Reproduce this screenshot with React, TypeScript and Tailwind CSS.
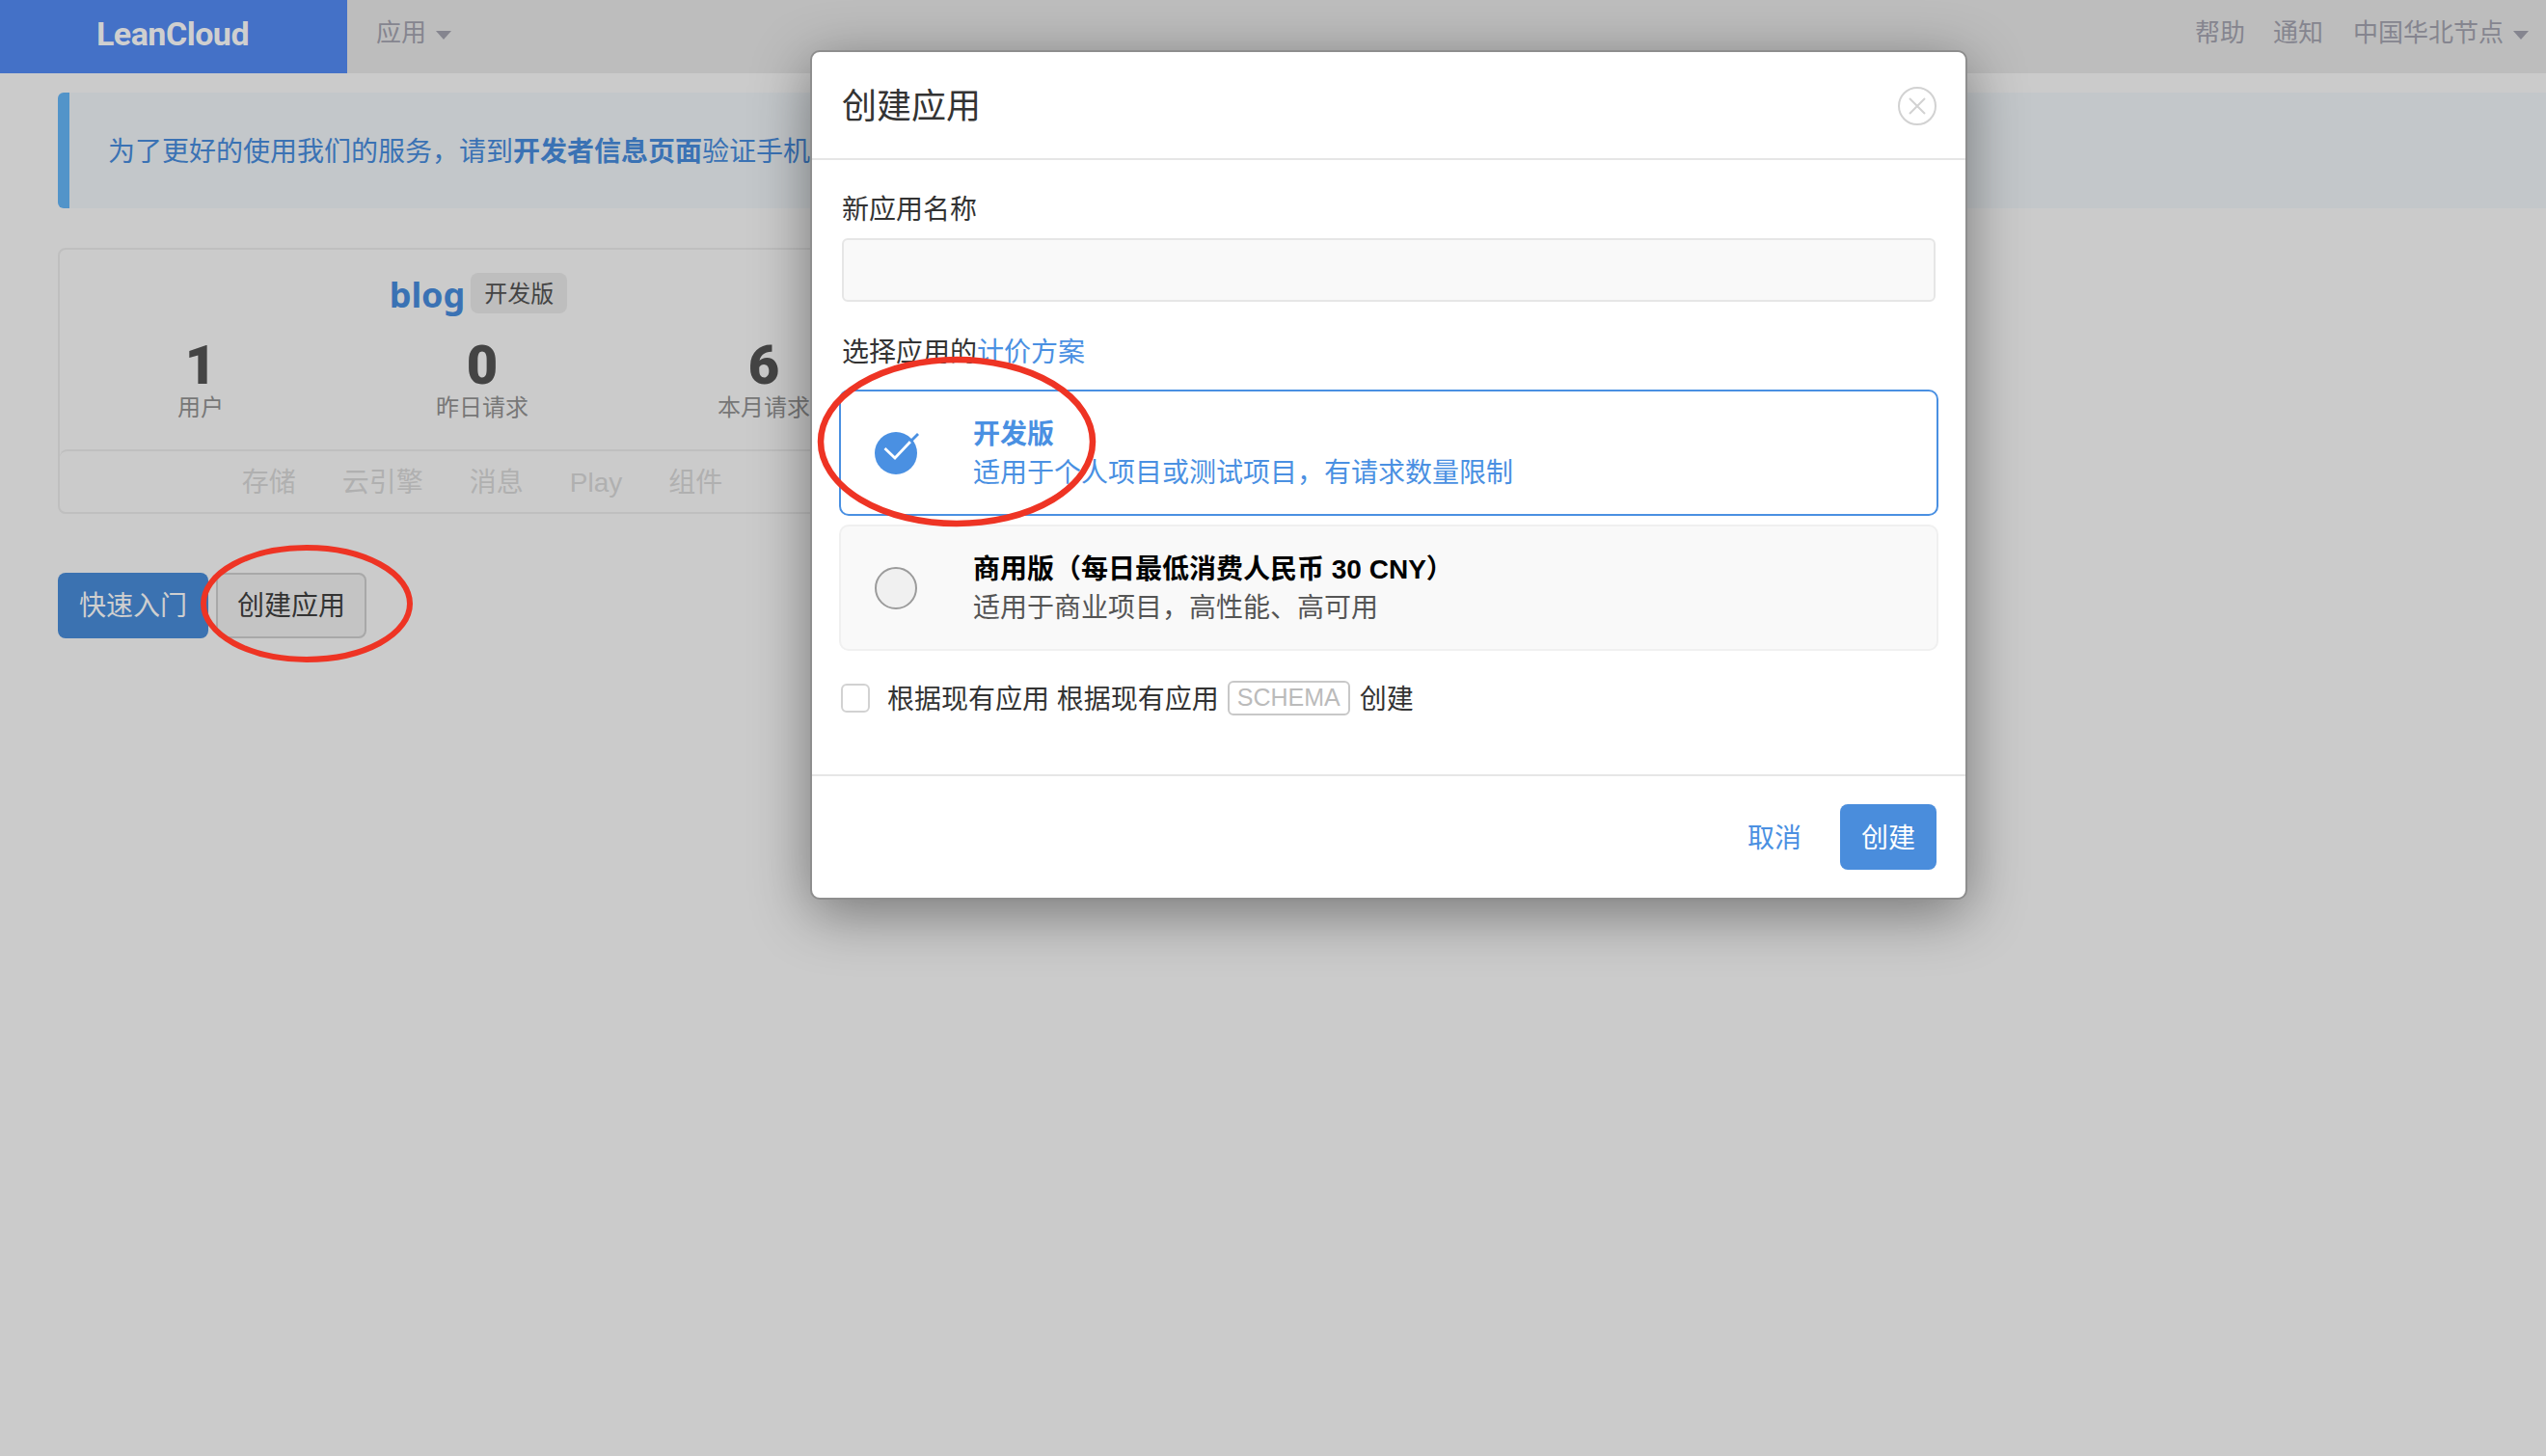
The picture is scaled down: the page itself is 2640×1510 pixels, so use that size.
import React from "react";

const FONT = "font-['Liberation_Sans','Noto_Sans_CJK_SC',sans-serif]";

function Caret({ color }: { color: string }) {
  return (
    <svg width="16" height="9" viewBox="0 0 16 9" className="shrink-0">
      <path d="M0 0h16L8 9z" fill={color} />
    </svg>
  );
}

function Stat({ value, label }: { value: string; label: string }) {
  return (
    <div className="flex flex-col items-center">
      <div className="h-[56px] pt-[1px] text-[56px] font-black leading-[56px] text-[#444] font-['Roboto',sans-serif]">{value}</div>
      <div className="h-[34px] text-[24px] leading-[34px] text-[#777]">{label}</div>
    </div>
  );
}

function CheckedRadio() {
  return (
    <svg width="50" height="50" viewBox="0 0 50 50" className="-mr-[6px] -mt-[6px] shrink-0">
      <circle cx="22" cy="28" r="22" fill="#4a90e2" />
      <path d="M10.500 23 L21 33 L37 16" fill="none" stroke="#fff" strokeWidth="2.800" />
      <path d="M37 16 L45 8" fill="none" stroke="#4a90e2" strokeWidth="2.800" />
    </svg>
  );
}

function Plan({
  selected,
  title,
  desc,
}: {
  selected?: boolean;
  title: string;
  desc: string;
}) {
  return (
    <div
      className={
        selected
          ? "-mx-[3px] flex h-[131px] items-center rounded-[10px] border-2 border-[#4a90e2] bg-white pl-[35px]"
          : "-mx-[3px] flex h-[131px] items-center rounded-[10px] border-2 border-[#f0f0f0] bg-[#f9f9f9] pl-[35px]"
      }
    >
      {selected ? (
        <CheckedRadio />
      ) : (
        <div className="h-[44px] w-[44px] shrink-0 rounded-full border-2 border-[#9b9b9b] bg-[#f0f0f0]" />
      )}
      <div className="ml-[58px] pt-[3px]">
        <div
          className={
            selected
              ? "text-[28px] font-bold leading-[40px] text-[#4a90e2]"
              : "text-[28px] font-bold leading-[40px] text-black"
          }
        >
          {title}
        </div>
        <div
          className={
            selected
              ? "text-[28px] leading-[40px] text-[#4a90e2]"
              : "text-[28px] leading-[40px] text-[#555]"
          }
        >
          {desc}
        </div>
      </div>
    </div>
  );
}

export default function App() {
  return (
    <div className={`relative h-[1510px] w-full overflow-hidden bg-[#cbcbcb] ${FONT}`}>
      {/* navbar */}
      <header className="flex h-[76px] items-center bg-[#bdbdbd] pr-[18px]">
        <div className="flex h-full w-[360px] items-center justify-center bg-[#4471c7] pb-[5px] pr-[2px] text-[34px] font-bold tracking-[-0.5px] text-[#cfcfcf] font-['Roboto',sans-serif]">
          LeanCloud
        </div>
        <div className="ml-[30px] flex items-center gap-[10px] pb-[8px] text-[26px] text-[#85858f]">
          应用
          <span className="pt-[4px]">
            <Caret color="#85858f" />
          </span>
        </div>
        <div className="ml-auto flex items-center pb-[8px] text-[26px] text-[#85858f]">
          <span>帮助</span>
          <span className="ml-[29px]">通知</span>
          <span className="ml-[31px]">中国华北节点</span>
          <span className="ml-[10px] pt-[4px]">
            <Caret color="#85858f" />
          </span>
        </div>
      </header>

      <main className="pl-[60px] pt-[20px]">
        <div className="flex h-[120px] items-center rounded-l-[6px] border-l-[12px] border-[#5294c9] bg-[#c3c7ca] pl-[40px] pt-[3px] text-[28px] text-[#3a72b4]">
          为了更好的使用我们的服务，请到<b>开发者信息页面</b>验证手机号码。
        </div>

        {/* app card */}
        <div className="mt-[41px] flex h-[276px] w-[880px] flex-col rounded-[8px] border-2 border-[#bfbfbf]">
          <div className="mt-[24px] flex h-[42px] items-center justify-center gap-[6px] pr-[8px]">
            <span className="pt-[3px] text-[36px] font-bold leading-[42px] text-[#3a72b4] font-['Noto_Sans',sans-serif]">blog</span>
            <span className="flex h-[42px] w-[100px] items-center justify-center rounded-[8px] bg-[#bebebe] pt-[1px] text-[24px] text-[#444]">
              开发版
            </span>
          </div>
          <div className="mt-[25px] grid grid-cols-3">
            <Stat value="1" label="用户" />
            <Stat value="0" label="昨日请求" />
            <Stat value="6" label="本月请求" />
          </div>
          <div className="mt-auto flex h-[65px] items-center justify-center gap-[48px] rounded-[8px] border-t-2 border-[#bfbfbf] pt-[2px] text-[28px] text-[#b0b0b0]">
            <span>存储</span>
            <span>云引擎</span>
            <span>消息</span>
            <span>Play</span>
            <span>组件</span>
          </div>
        </div>

        <div className="mt-[61px] flex gap-[8px]">
          <button className="h-[68px] w-[156px] rounded-[8px] bg-[#3b72b1] pt-[2px] text-[28px] text-[#cfcfcf]">
            快速入门
          </button>
          <button className="h-[68px] w-[156px] rounded-[8px] border-2 border-[#a8a8a8] bg-[#c4c4c4] pt-[2px] text-[28px] text-[#333]">
            创建应用
          </button>
        </div>
      </main>

      {/* modal */}
      <div className="absolute left-[840px] top-[52px] w-[1200px] rounded-[10px] border-2 border-[#8e8e8e] bg-white shadow-[0_14px_60px_rgba(0,0,0,0.42)]">
        <div className="flex h-[112px] items-center justify-between border-b-2 border-[#e6e6e6] pl-[31px] pr-[30px]">
          <h2 className="pt-[3px] text-[36px] font-normal text-[#333]">创建应用</h2>
          <svg width="40" height="40" viewBox="0 0 40 40" fill="none" stroke="#d2d2d2" strokeWidth="2" className="mt-[1px]">
            <circle cx="20" cy="20" r="19" />
            <path d="M12 12l16 16M28 12L12 28" />
          </svg>
        </div>

        <div className="px-[31px] pb-[59px] pt-[32px]">
          <div className="text-[28px] leading-[40px] text-[#333]">新应用名称</div>
          <div className="mt-[9px] h-[66px] rounded-[6px] border-2 border-[#e6e6e6] bg-[#f9f9f9]" />
          <div className="mt-[33px] text-[28px] leading-[40px] text-[#333]">
            选择应用的<span className="text-[#4a90e2]">计价方案</span>
          </div>
          <div className="mt-[18px] flex flex-col gap-[9px]">
            <Plan selected title="开发版" desc="适用于个人项目或测试项目，有请求数量限制" />
            <Plan title="商用版（每日最低消费人民币 30 CNY）" desc="适用于商业项目，高性能、高可用" />
          </div>
          <div className="mt-[29px] flex h-[40px] items-center text-[28px] text-[#333]">
            <div className="-ml-[1px] h-[30px] w-[30px] rounded-[6px] border-2 border-[#d2d2d2]" />
            <span className="ml-[18px] pt-[3px]">根据现有应用 根据现有应用</span>
            <span className="ml-[9px] flex h-[36px] w-[127px] items-center justify-center rounded-[6px] border-2 border-[#c8c8c8] text-[25px] text-[#bbb]">
              SCHEMA
            </span>
            <span className="ml-[10px] pt-[3px]">创建</span>
          </div>
        </div>

        <div className="flex items-center justify-end border-t-2 border-[#e6e6e6] py-[29px] pl-[31px] pr-[30px]">
          <span className="mr-[40px] pt-[3px] text-[28px] text-[#4a90e2]">取消</span>
          <button className="h-[68px] w-[100px] rounded-[8px] bg-[#4a8ddc] pt-[3px] text-[28px] text-white">
            创建
          </button>
        </div>
      </div>

      {/* red annotation circles */}
      <svg className="pointer-events-none absolute left-[200px] top-[558px]" width="236" height="136" viewBox="0 0 236 136" fill="none">
        <ellipse cx="118" cy="68" rx="107" ry="58" stroke="#ee3424" strokeWidth="6" />
      </svg>
      <svg className="pointer-events-none absolute left-[840px] top-[362px]" width="304" height="192" viewBox="0 0 304 192" fill="none">
        <ellipse cx="152" cy="96" rx="141" ry="85" stroke="#ee3424" strokeWidth="6.500" />
      </svg>
    </div>
  );
}
